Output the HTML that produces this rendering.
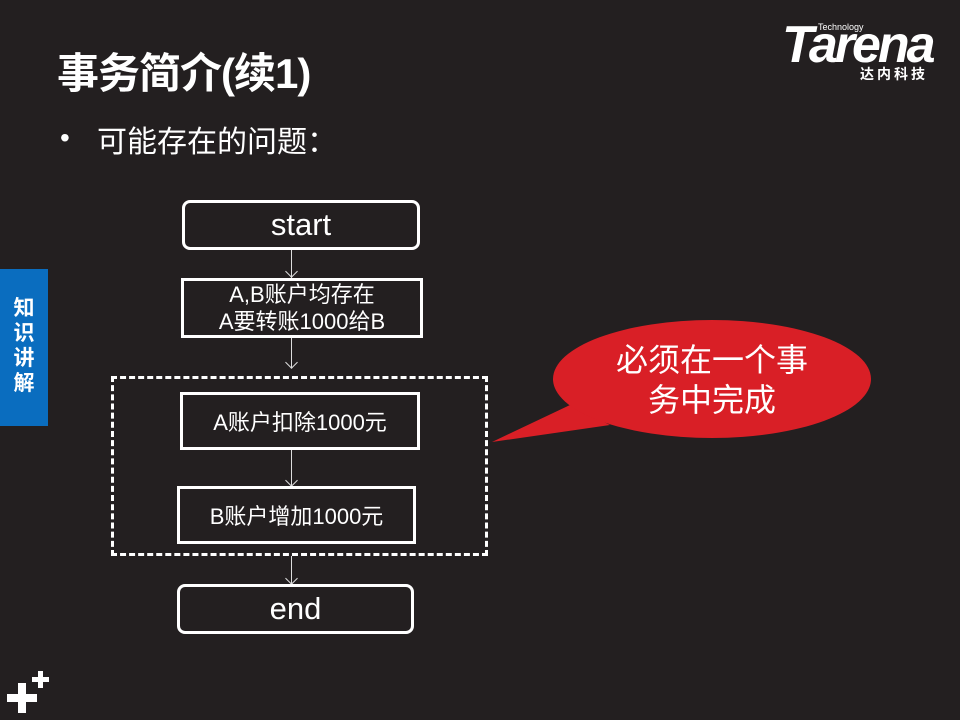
<!DOCTYPE html>
<html><head><meta charset="utf-8"><style>
body{margin:0;width:960px;height:720px;background:#231f20;position:relative;overflow:hidden;font-family:"Liberation Sans","Noto Sans CJK SC",sans-serif;color:#fff}
.a{position:absolute}
.box{position:absolute;border:3px solid #fff;box-sizing:border-box;display:flex;align-items:center;justify-content:center;text-align:center;color:#fff}
.ln{position:absolute;width:1px;background:#ddd}
.ar{position:absolute;width:8px;height:8px;border-right:1px solid #ddd;border-bottom:1px solid #ddd;transform:rotate(45deg)}
</style></head><body>
<div class="a" style="left:57px;top:40px;font-size:42px;font-weight:bold;letter-spacing:-1px">事务简介(续1)</div>
<div class="a" style="left:782px;top:18px;font-size:52px;font-weight:bold;font-style:italic;letter-spacing:-3px;line-height:54px">Tarena</div>
<div class="a" style="left:818px;top:22px;font-size:9px">Technology</div>
<div class="a" style="left:860px;top:64px;font-size:14px;font-weight:bold;letter-spacing:3px">达内科技</div>
<div class="a" style="left:60px;top:122px;font-size:28px">•</div>
<div class="a" style="left:97px;top:117px;font-size:30px">可能存在的问题：</div>
<div class="a" style="left:0;top:269px;width:48px;height:157px;background:#0a6dbf"></div>
<div class="a" style="left:12px;top:296px;width:24px;font-size:21px;font-weight:bold;line-height:25px;text-align:center">知<br>识<br>讲<br>解</div>

<div class="box" style="left:182px;top:200px;width:238px;height:50px;border-radius:8px;font-size:31px">start</div>
<div class="ln" style="left:291px;top:250px;height:28px"></div><div class="ar" style="left:287px;top:267px"></div>
<div class="box" style="left:181px;top:278px;width:242px;height:60px;font-size:22px;line-height:27px">A,B账户均存在<br>A要转账1000给B</div>
<div class="ln" style="left:291px;top:338px;height:30px"></div><div class="ar" style="left:287px;top:358px"></div>
<div class="a" style="left:111px;top:376px;width:377px;height:180px;border:3px dashed #fff;box-sizing:border-box"></div>
<div class="box" style="left:180px;top:392px;width:240px;height:58px;font-size:22px">A账户扣除1000元</div>
<div class="ln" style="left:291px;top:450px;height:36px"></div><div class="ar" style="left:287px;top:476px"></div>
<div class="box" style="left:177px;top:486px;width:239px;height:58px;font-size:22px">B账户增加1000元</div>
<div class="ln" style="left:291px;top:556px;height:28px"></div><div class="ar" style="left:287px;top:574px"></div>
<div class="box" style="left:177px;top:584px;width:237px;height:50px;border-radius:8px;font-size:31px">end</div>

<svg class="a" style="left:0;top:0" width="960" height="720">
<path d="M492,442 L570,405 L610,425 Z" fill="#d91f26"/>
<ellipse cx="712" cy="379" rx="159" ry="59" fill="#d91f26"/>
<rect x="7" y="694" width="30" height="8" fill="#fff"/><rect x="18" y="683" width="8" height="30" fill="#fff"/>
<rect x="32" y="677" width="17" height="5" fill="#fff"/><rect x="38" y="671" width="5" height="17" fill="#fff"/>
</svg>
<div class="a" style="left:590px;top:340px;width:244px;text-align:center;font-size:32px;line-height:40px">必须在一个事<br>务中完成</div>
</body></html>
